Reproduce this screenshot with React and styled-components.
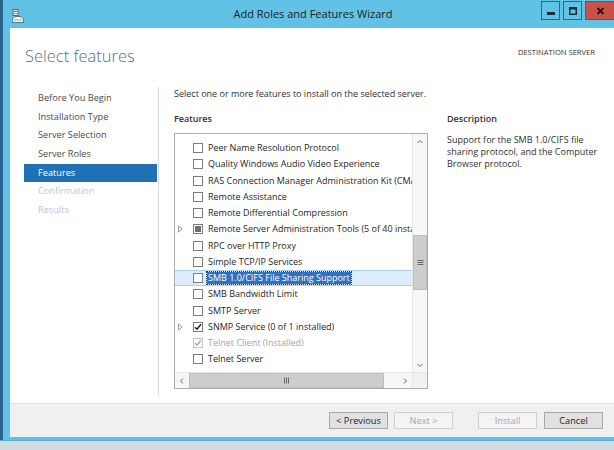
import styled, { createGlobalStyle } from 'styled-components';

const GlobalStyle = createGlobalStyle`
  html, body {
    margin: 0;
    padding: 0;
  }
  body {
    width: 614px;
    height: 450px;
    overflow: hidden;
    background: #d3dbe1;
    font-family: "Open Sans", "Noto Sans", sans-serif;
    color: #2b2b2b;
  }
`;

const Desktop = styled.div`
  width: 614px;
  height: 450px;
  display: flex;
  flex-direction: column;
`;

const Window = styled.div`
  margin-left: 3px;
  width: 611px;
  height: 440px;
  box-sizing: border-box;
  padding: 0 0 3px 7px;
  background: #62c2e6;
  box-shadow: -3px 0 0 #2b648d;
  display: flex;
  flex-direction: column;
`;

const TitleBar = styled.div`
  height: 28px;
  margin-left: -7px;
  display: grid;
  grid-template-columns: 1fr auto 1fr;
  align-items: start;
`;

const AppIcon = styled.div`
  padding: 6px 0 0 9px;
`;

const Title = styled.div`
  padding: 6px 0 0 9px;
  font-size: 11px;
  line-height: 15px;
  color: #1c1c1c;
`;

const Controls = styled.div`
  justify-self: end;
  display: flex;
  gap: 3px;
  padding-top: 1px;
`;

const CaptionButton = styled.div`
  width: ${(p) => (p.$close ? 29 : 19)}px;
  height: 19px;
  box-sizing: border-box;
  border: 1px solid #2e6a88;
  border-right: ${(p) => (p.$close ? 'none' : '1px solid #2e6a88')};
  background: ${(p) => (p.$close ? '#c8524a' : '#62c2e6')};
  display: flex;
  align-items: center;
  justify-content: center;
`;

const Content = styled.div`
  flex: 1;
  background: #fff;
  display: flex;
  flex-direction: column;
`;

const Header = styled.div`
  height: 59px;
  box-sizing: border-box;
  padding: 15px 19px 0 15px;
  display: flex;
  justify-content: space-between;
  align-items: flex-start;
`;

const PageTitle = styled.div`
  font-size: 16.5px;
  font-weight: 300;
  line-height: 26px;
  color: #557189;
`;

const DestServer = styled.div`
  margin-top: 4px;
  font-size: 7.6px;
  line-height: 10px;
  color: #333;
`;

const Body = styled.div`
  flex: 1;
  display: flex;
`;

const Nav = styled.div`
  margin-left: 14px;
  width: 133px;
  padding-top: 2px;
  display: flex;
  flex-direction: column;
`;

const NavItem = styled.div`
  height: 18.67px;
  line-height: 18px;
  padding-left: 14px;
  font-size: 9.2px;
  color: ${(p) => (p.$active ? '#fff' : p.$disabled ? '#c4c4c4' : '#4a4a4a')};
  background: ${(p) => (p.$active ? '#2070b6' : 'transparent')};
`;

const Divider = styled.div`
  width: 1px;
  margin: 0 0 8px 1px;
  background: #d9d9d9;
`;

const Main = styled.div`
  margin-left: 15px;
  width: 254px;
  display: flex;
  flex-direction: column;
`;

const Text = styled.div`
  font-size: 9px;
  line-height: 13px;
  color: #2f2f2f;
`;

const Label = styled.div`
  margin-top: ${(p) => p.$top}px;
  font-size: 9px;
  line-height: 13px;
  font-weight: 600;
  color: #333;
`;

const ListBox = styled.div`
  margin-top: 8px;
  height: 256px;
  box-sizing: border-box;
  border: 1px solid #abadb3;
  display: grid;
  grid-template-columns: 1fr 15px;
  grid-template-rows: 1fr 16px;
`;

const Items = styled.div`
  overflow: hidden;
  padding-top: 6px;
`;

const Row = styled.div`
  height: 16.25px;
  box-sizing: border-box;
  display: flex;
  align-items: center;
  white-space: nowrap;
  font-size: 9px;
  color: ${(p) => (p.$disabled ? '#a3a3a3' : '#262626')};
  background: ${(p) => (p.$hover ? '#deedfb' : 'transparent')};
  border-top: 1px solid ${(p) => (p.$hover ? '#a9d0f1' : 'transparent')};
  border-bottom: 1px solid ${(p) => (p.$hover ? '#a9d0f1' : 'transparent')};
`;

const Expander = styled.div`
  width: 18px;
  flex: none;
  padding-left: 3px;
  box-sizing: border-box;
  display: flex;
  align-items: center;
`;

const Check = styled.div`
  width: 10px;
  height: 10px;
  flex: none;
  box-sizing: border-box;
  border: 1px solid ${(p) => (p.$disabled ? '#c2c2c2' : '#7d7d7d')};
  background: #fff;
  margin-right: 5px;
  display: flex;
  align-items: center;
  justify-content: center;
`;

const Partial = styled.div`
  width: 6px;
  height: 6px;
  background: #6f6f6f;
`;

const ItemText = styled.span`
  padding: 0 1px;
  margin-left: -1px;
  line-height: 12px;
  background: ${(p) => (p.$selected ? '#2f72c4' : 'transparent')};
  color: ${(p) => (p.$selected ? '#fff' : 'inherit')};
  outline: ${(p) => (p.$selected ? '1px dotted #1a3f6e' : 'none')};
`;

const VScroll = styled.div`
  background: #f6f6f6;
  border-left: 1px solid #e6e6e6;
  display: flex;
  flex-direction: column;
`;

const HScroll = styled.div`
  background: #f6f6f6;
  border-top: 1px solid #e6e6e6;
  display: flex;
`;

const Corner = styled.div`
  background: #f0f0f0;
  border-top: 1px solid #e6e6e6;
  border-left: 1px solid #e6e6e6;
`;

const ArrowBox = styled.div`
  width: ${(p) => (p.$vertical ? '100%' : '14px')};
  height: ${(p) => (p.$vertical ? '15px' : '100%')};
  flex: none;
  display: flex;
  align-items: center;
  justify-content: center;
`;

const Track = styled.div`
  flex: 1;
  display: flex;
  flex-direction: ${(p) => (p.$vertical ? 'column' : 'row')};
`;

const Thumb = styled.div`
  flex: none;
  box-sizing: border-box;
  margin-${(p) => (p.$vertical ? 'top' : 'left')}: ${(p) => p.$start}px;
  ${(p) => (p.$vertical ? 'height' : 'width')}: ${(p) => p.$size}px;
  background: #cdcdcd;
  border: 1px solid #bdbdbd;
  display: flex;
  align-items: center;
  justify-content: center;
`;

const Desc = styled.div`
  margin-left: 19px;
  flex: 1;
  padding-right: 12px;
`;

const DescText = styled.div`
  margin-top: 9px;
  font-size: 9px;
  line-height: 12.2px;
  color: #303030;
`;

const Footer = styled.div`
  height: 34px;
  box-sizing: border-box;
  border-top: 1px solid #e2e2e2;
  background: #f0f0f0;
  display: flex;
  justify-content: flex-end;
  align-items: flex-start;
  padding: 8px 11px 0 0;
`;

const Button = styled.button`
  width: 59px;
  height: 17px;
  margin-left: ${(p) => p.$gap || 0}px;
  padding: 0;
  box-sizing: border-box;
  font-family: "Open Sans", "Noto Sans", sans-serif;
  font-size: 9.2px;
  color: #222;
  background: #e1e1e1;
  border: 1px solid #a8a8a8;
  &:disabled {
    color: #a6a6a6;
    background: #f4f4f4;
    border-color: #d0d0d0;
  }
`;

const BottomStrip = styled.div`
  flex: 1;
  background: #d4dce1;
  border-top: 1px solid #4fb3da;
`;

const features = [
  { name: 'Peer Name Resolution Protocol' },
  { name: 'Quality Windows Audio Video Experience' },
  { name: 'RAS Connection Manager Administration Kit (CMAK)' },
  { name: 'Remote Assistance' },
  { name: 'Remote Differential Compression' },
  { name: 'Remote Server Administration Tools (5 of 40 installed)', expand: true, state: 'partial' },
  { name: 'RPC over HTTP Proxy' },
  { name: 'Simple TCP/IP Services' },
  { name: 'SMB 1.0/CIFS File Sharing Support', selected: true },
  { name: 'SMB Bandwidth Limit' },
  { name: 'SMTP Server' },
  { name: 'SNMP Service (0 of 1 installed)', expand: true, state: 'checked' },
  { name: 'Telnet Client (Installed)', state: 'checked', disabled: true },
  { name: 'Telnet Server' },
];

const steps = [
  { name: 'Before You Begin' },
  { name: 'Installation Type' },
  { name: 'Server Selection' },
  { name: 'Server Roles' },
  { name: 'Features', active: true },
  { name: 'Confirmation', disabled: true },
  { name: 'Results', disabled: true },
];

function Chevron({ dir }) {
  const paths = {
    up: 'M1.5 5 L4 2.5 L6.5 5',
    down: 'M1.5 3 L4 5.5 L6.5 3',
    left: 'M5 1.5 L2.5 4 L5 6.5',
    right: 'M3 1.5 L5.5 4 L3 6.5',
  };
  return (
    <svg width="8" height="8" viewBox="0 0 8 8">
      <path d={paths[dir]} fill="none" stroke="#6b6b6b" strokeWidth="1" />
    </svg>
  );
}

function Grip({ vertical }) {
  return (
    <svg width="7" height="7" viewBox="0 0 7 7">
      {vertical
        ? [1.5, 3.5, 5.5].map((y) => <line key={y} x1="0.5" x2="6.5" y1={y} y2={y} stroke="#666" strokeWidth="1" />)
        : [1.5, 3.5, 5.5].map((x) => <line key={x} y1="0.5" y2="6.5" x1={x} x2={x} stroke="#666" strokeWidth="1" />)}
    </svg>
  );
}

function Triangle() {
  return (
    <svg width="5" height="8" viewBox="0 0 5 8">
      <path d="M0.5 0.8 L4.2 4 L0.5 7.2 Z" fill="none" stroke="#9a9a9a" strokeWidth="1" />
    </svg>
  );
}

function FeatureRow({ item }) {
  return (
    <Row $hover={item.selected} $disabled={item.disabled}>
      <Expander>{item.expand && <Triangle />}</Expander>
      <Check $disabled={item.disabled}>
        {item.state === 'partial' && <Partial />}
        {item.state === 'checked' && (
          <svg width="8" height="8" viewBox="0 0 8 8">
            <path
              d="M1 4.2 L3 6.3 L7 1.3"
              fill="none"
              stroke={item.disabled ? '#a8a8a8' : '#1e1e1e'}
              strokeWidth="1.4"
            />
          </svg>
        )}
      </Check>
      <ItemText $selected={item.selected}>{item.name}</ItemText>
    </Row>
  );
}

function ServerIcon() {
  return (
    <svg width="12" height="14" viewBox="0 0 12 14">
      <rect x="1" y="0.5" width="5" height="6" fill="#e9eef2" stroke="#4b6d85" strokeWidth="1" />
      <rect x="2" y="2" width="3" height="1" fill="#2d8ad0" />
      <rect x="2" y="4" width="3" height="1" fill="#8fa4b3" />
      <path d="M0.5 13.5 L0.5 10 L3 7.5 L9 7.5 L11.5 10 L11.5 13.5 Z" fill="#f4f6f8" stroke="#5c7486" strokeWidth="1" />
      <rect x="2" y="10.5" width="8" height="1" fill="#8fa4b3" />
    </svg>
  );
}

export default function App() {
  return (
    <>
      <GlobalStyle />
      <Desktop>
        <Window>
          <TitleBar>
            <AppIcon>
              <ServerIcon />
            </AppIcon>
            <Title>Add Roles and Features Wizard</Title>
            <Controls>
              <CaptionButton>
                <svg width="8" height="8" viewBox="0 0 8 8">
                  <rect x="0" y="5" width="8" height="3" fill="#1c2e38" />
                </svg>
              </CaptionButton>
              <CaptionButton>
                <svg width="8" height="8" viewBox="0 0 8 8">
                  <rect x="0.75" y="0.75" width="6.5" height="6.5" fill="none" stroke="#1c2e38" strokeWidth="1.5" />
                  <rect x="0" y="0" width="8" height="2.5" fill="#1c2e38" />
                </svg>
              </CaptionButton>
              <CaptionButton $close>
                <svg width="9" height="8" viewBox="0 0 9 8">
                  <path d="M1.5 1 L7.5 7 M7.5 1 L1.5 7" stroke="#2a1010" strokeWidth="1.8" />
                </svg>
              </CaptionButton>
            </Controls>
          </TitleBar>
          <Content>
            <Header>
              <PageTitle>Select features</PageTitle>
              <DestServer>DESTINATION SERVER</DestServer>
            </Header>
            <Body>
              <Nav>
                {steps.map((s) => (
                  <NavItem key={s.name} $active={s.active} $disabled={s.disabled}>
                    {s.name}
                  </NavItem>
                ))}
              </Nav>
              <Divider />
              <Main>
                <Text>Select one or more features to install on the selected server.</Text>
                <Label $top={12}>Features</Label>
                <ListBox>
                  <Items>
                    {features.map((f) => (
                      <FeatureRow key={f.name} item={f} />
                    ))}
                  </Items>
                  <VScroll>
                    <ArrowBox $vertical>
                      <Chevron dir="up" />
                    </ArrowBox>
                    <Track $vertical>
                      <Thumb $vertical $start={86} $size={55}>
                        <Grip vertical />
                      </Thumb>
                    </Track>
                    <ArrowBox $vertical>
                      <Chevron dir="down" />
                    </ArrowBox>
                  </VScroll>
                  <HScroll>
                    <ArrowBox>
                      <Chevron dir="left" />
                    </ArrowBox>
                    <Track>
                      <Thumb $start={0} $size={195}>
                        <Grip />
                      </Thumb>
                    </Track>
                    <ArrowBox>
                      <Chevron dir="right" />
                    </ArrowBox>
                  </HScroll>
                  <Corner />
                </ListBox>
              </Main>
              <Desc>
                <Label $top={25}>Description</Label>
                <DescText>
                  Support for the SMB 1.0/CIFS file sharing protocol, and the Computer Browser protocol.
                </DescText>
              </Desc>
            </Body>
            <Footer>
              <Button>&lt; Previous</Button>
              <Button $gap={6} disabled>
                Next &gt;
              </Button>
              <Button $gap={25} disabled>
                Install
              </Button>
              <Button $gap={7}>Cancel</Button>
            </Footer>
          </Content>
        </Window>
        <BottomStrip />
      </Desktop>
    </>
  );
}
